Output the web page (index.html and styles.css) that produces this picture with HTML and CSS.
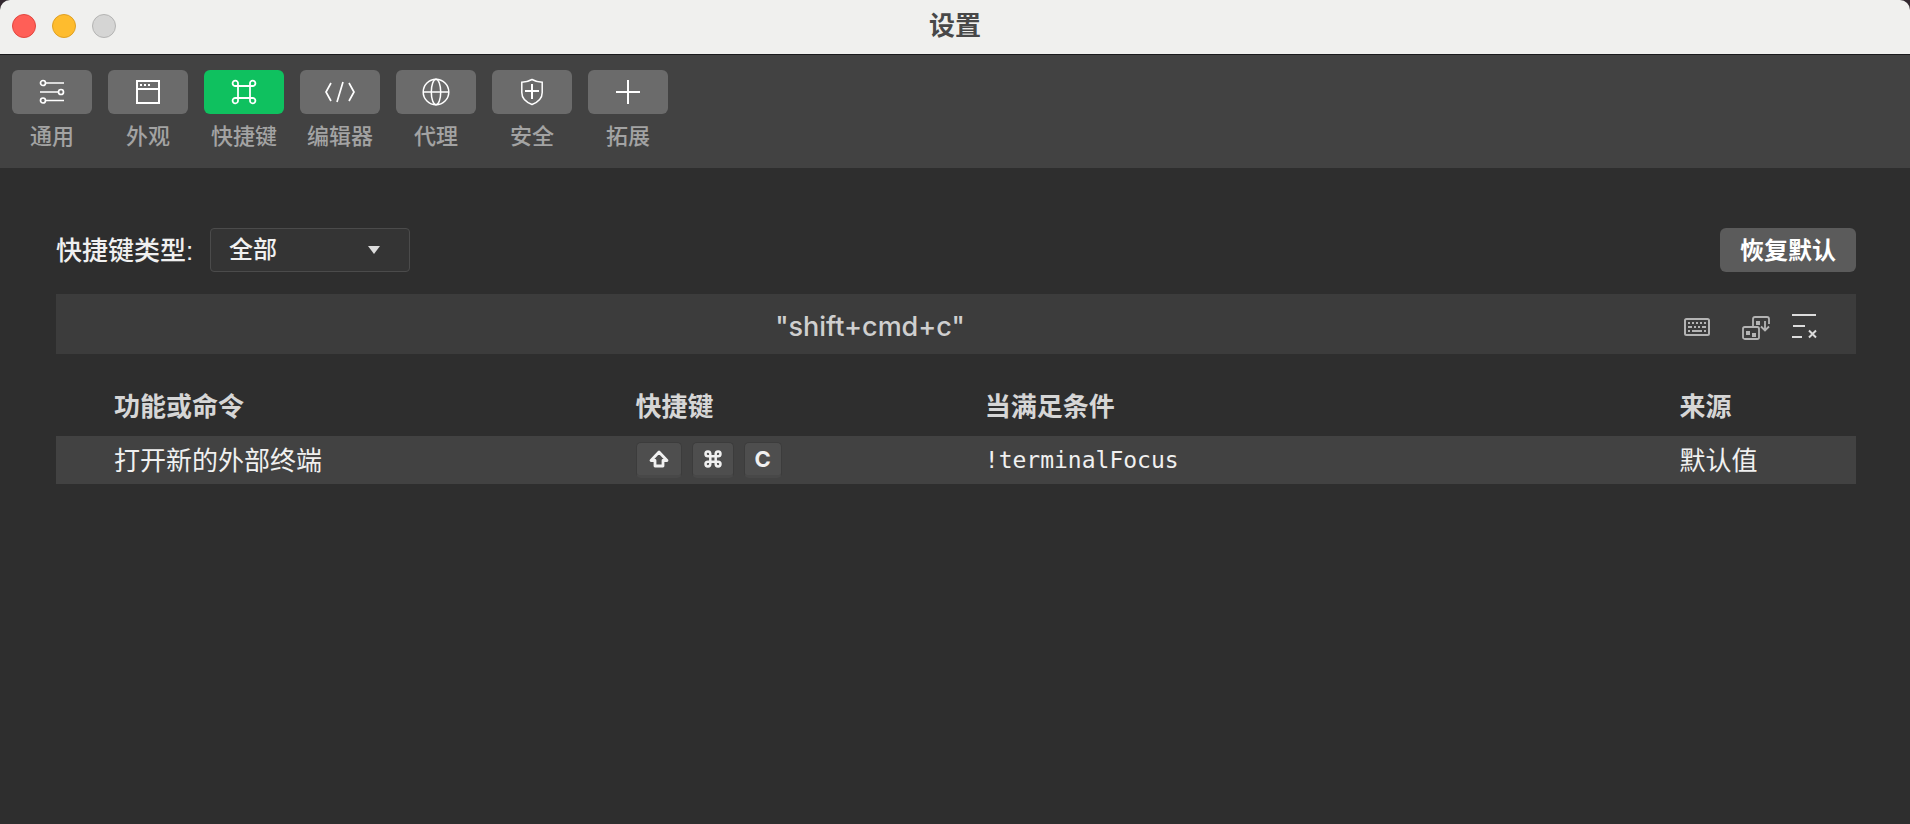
FILE: index.html
```html
<!DOCTYPE html>
<html lang="zh-CN">
<head>
<meta charset="utf-8">
<title>设置</title>
<link rel="stylesheet" href="styles.css">
</head>
<body>
<div class="window">
  <header class="titlebar">
    <div class="lights">
      <button class="light light-close" aria-label="关闭"></button>
      <button class="light light-min" aria-label="最小化"></button>
      <button class="light light-off" aria-label="缩放" disabled></button>
    </div>
    <h1 class="title">设置</h1>
  </header>

  <nav class="toolbar">
    <button class="tab">
      <span class="tab-icon"><svg width="28" height="28" viewBox="0 0 28 28" fill="none" stroke="#fff" stroke-width="1.7"><circle cx="5" cy="5" r="2.5"/><path d="M7.5 5H26M2 14h18.500M7.500 22.500H26"/><circle cx="23" cy="14" r="2.500"/><circle cx="5" cy="22.500" r="2.500"/></svg></span>
      <span class="tab-label">通用</span>
    </button>
    <button class="tab">
      <span class="tab-icon"><svg width="28" height="28" viewBox="0 0 28 28" fill="none" stroke="#fff" stroke-width="2"><path d="M3 3h22v22H3zM3 11h22"/><path d="M6 7h2M10 7h2M14 7h2"/></svg></span>
      <span class="tab-label">外观</span>
    </button>
    <button class="tab tab-active" aria-current="page">
      <span class="tab-icon"><svg width="28" height="28" viewBox="0 0 28 28" fill="none" stroke="#fff" stroke-width="1.8"><path d="M8 8V5.500A2.700 2.700 0 1 0 5.500 8H22.500A2.700 2.700 0 1 0 20 5.500V22.500A2.700 2.700 0 1 0 22.500 20H5.500A2.700 2.700 0 1 0 8 22.500Z"/></svg></span>
      <span class="tab-label">快捷键</span>
    </button>
    <button class="tab">
      <span class="tab-icon"><svg width="32" height="28" viewBox="0 0 32 28" fill="none" stroke="#fff" stroke-width="1.7"><path d="M7 5 2 14l5 9M25 5l5 9-5 9M19 4l-6 20"/></svg></span>
      <span class="tab-label">编辑器</span>
    </button>
    <button class="tab">
      <span class="tab-icon"><svg width="28" height="28" viewBox="0 0 28 28" fill="none" stroke="#fff" stroke-width="1.500"><circle cx="14" cy="14" r="12.800"/><ellipse cx="14" cy="14" rx="4.700" ry="12.800"/><path d="M1 14h26"/></svg></span>
      <span class="tab-label">代理</span>
    </button>
    <button class="tab">
      <span class="tab-icon"><svg width="28" height="28" viewBox="0 0 28 28" fill="none" stroke="#fff" stroke-width="1.500"><path d="M14 1.500C11 3.200 7.500 4.200 3.800 4.200V14.500c0 5.500 4.500 9.800 10.200 12 5.700-2.200 10.200-6.500 10.200-12V4.200C20.500 4.200 17 3.200 14 1.500Z"/><path stroke-width="2" d="M14 6v15M7 13h14"/></svg></span>
      <span class="tab-label">安全</span>
    </button>
    <button class="tab">
      <span class="tab-icon"><svg width="28" height="28" viewBox="0 0 28 28" fill="none" stroke="#fff" stroke-width="2"><path d="M14 2v24M2 14h24"/></svg></span>
      <span class="tab-label">拓展</span>
    </button>
  </nav>

  <main class="content">
    <div class="filters">
      <label class="filter-label" for="kind">快捷键类型:</label>
      <div class="select-box">
        <select class="select" id="kind"><option>全部</option></select>
        <svg class="select-arrow" width="12" height="8" viewBox="0 0 12 8"><path fill="#dcdcdc" d="M0 0h12L6 8z"/></svg>
      </div>
      <button class="reset">恢复默认</button>
    </div>

    <div class="search">
      <input class="search-input" type="text" aria-label="搜索快捷键" value='"shift+cmd+c"'>
      <button class="tool" aria-label="录制按键"><svg width="26" height="28" viewBox="0 0 26 28" fill="none" stroke="#b4b4b4" stroke-width="2"><rect x="1" y="6" width="24" height="16" rx="1.500"/><path d="M4 10h2M8 10h2M12 10h2M16 10h2M20 10h2M4 14h4M10 14h2M14 14h2M18 14h4M4 18h2M8 18h10M20 18h2"/></svg></button>
      <button class="tool tool-sort" aria-label="按优先级排序"><svg width="28" height="28" viewBox="0 0 28 28" fill="none" stroke="#b4b4b4" stroke-width="1.800"><rect x="1" y="14" width="16" height="12" rx="1.800"/><path d="M11 14V6q0-2 2-2h12q2 0 2 2v5"/><path d="M23 8v9M19 13.500l4 4 4-4"/><path stroke="none" fill="#b4b4b4" d="M14 8h4v4h-4zM4 18h4v4H4zM10 20h4v4h-4z"/></svg></button>
      <button class="tool tool-clear" aria-label="清除搜索"><svg width="26" height="28" viewBox="0 0 26 28" fill="none" stroke="#dcdcdc" stroke-width="2"><path d="M0 2h24M1 13h12M0 24h10M17 17.500l7 7M24 17.500l-7 7"/></svg></button>
    </div>

    <table class="keys">
      <colgroup><col class="col-command"><col class="col-keys"><col class="col-when"><col class="col-source"></colgroup>
      <thead>
        <tr><th>功能或命令</th><th>快捷键</th><th>当满足条件</th><th>来源</th></tr>
      </thead>
      <tbody>
        <tr>
          <td>打开新的外部终端</td>
          <td class="combo-cell">
            <div class="combo">
              <kbd class="key"><svg width="24" height="20" viewBox="-2 0 24 20" role="img" aria-label="Shift"><path fill="none" stroke="#f0f0f0" stroke-width="2.800" stroke-linejoin="round" d="M10 3 2 11.500h4V17h8v-5.500h4z"/></svg></kbd>
              <kbd class="key"><svg width="20" height="20" viewBox="-1 0 20 20" role="img" aria-label="Command"><path fill="none" stroke="#f0f0f0" stroke-width="2.500" d="M6.300 7.300V4.700A2.400 2.400 0 1 0 3.900 7.300H14.100A2.400 2.400 0 1 0 11.700 4.700V15.100A2.400 2.400 0 1 0 14.100 12.700H3.900A2.400 2.400 0 1 0 6.300 15.100Z"/></svg></kbd>
              <kbd class="key">C</kbd>
            </div>
          </td>
          <td class="when">!terminalFocus</td>
          <td>默认值</td>
        </tr>
      </tbody>
    </table>
  </main>
</div>
</body>
</html>
```

FILE: styles.css
```css
* {
  box-sizing: border-box;
}

body {
  margin: 0;
  background: #33282f;
  color: #f0f0f0;
  font-family: "Liberation Sans", "Noto Sans CJK SC", sans-serif;
  font-size: 26px;
}

button,
input,
select {
  margin: 0;
  padding: 0;
  border: 0;
  background: none;
  color: inherit;
  font: inherit;
}

svg {
  display: block;
}

.window {
  display: flex;
  flex-direction: column;
  min-height: 100vh;
  border-radius: 10px 10px 0 0;
  background: #2e2e2e;
  overflow: hidden;
}

.titlebar {
  display: grid;
  grid-template-columns: 1fr auto 1fr;
  align-items: center;
  height: 55px;
  padding: 0 12px;
  border-bottom: 1px solid #1a1a1c;
  background: #f0f0ee;
}

.lights {
  display: flex;
  gap: 16px;
  padding-bottom: 2px;
}

.light {
  width: 24px;
  height: 24px;
  border: 1px solid;
  border-radius: 50%;
}

.light-close {
  border-color: #e2463f;
  background: #ff5f57;
}

.light-min {
  border-color: #dfa023;
  background: #febc2e;
}

.light-off {
  border-color: #b4b4b3;
  background: #d5d5d4;
}

.title {
  margin: 0;
  padding-bottom: 2px;
  color: #484848;
  font-size: 26px;
  font-weight: 700;
  line-height: 36px;
}

.toolbar {
  display: flex;
  gap: 16px;
  padding: 15px 12px 13px;
  background: #424242;
}

.tab {
  display: flex;
  flex-direction: column;
  gap: 5px;
  width: 80px;
  color: #a3a3a3;
}

.tab-icon {
  display: grid;
  place-items: center;
  width: 80px;
  height: 44px;
  border-radius: 6px;
  background: #6b6b6b;
}

.tab-active .tab-icon {
  background: #0fc15f;
}

.tab-label {
  align-self: center;
  font-size: 22px;
  font-weight: 500;
  line-height: 36px;
}

.content {
  padding: 60px 54px 60px 56px;
}

.filters {
  display: flex;
  align-items: center;
  height: 44px;
}

.filter-label {
  width: 154px;
  padding-top: 2px;
  font-weight: 500;
  line-height: 42px;
}

.select-box {
  display: grid;
  align-items: center;
  width: 200px;
  height: 44px;
}

.select {
  grid-area: 1 / 1;
  width: 100%;
  height: 44px;
  padding: 0 40px 0 18px;
  border: 1px solid #4b4b4b;
  border-radius: 4px;
  background: #343434;
  font-size: 24px;
  font-weight: 500;
  line-height: 36px;
  appearance: none;
}

.select-arrow {
  grid-area: 1 / 1;
  justify-self: end;
  margin-right: 30px;
  pointer-events: none;
}

.reset {
  width: 136px;
  height: 44px;
  margin-left: auto;
  padding-bottom: 4px;
  border-radius: 6px;
  background: #5b5b5b;
  color: #fff;
  font-size: 24px;
  font-weight: 700;
}

.search {
  display: flex;
  align-items: center;
  height: 60px;
  margin-top: 22px;
  padding-right: 38px;
  background: #3c3c3c;
}

.search-input {
  flex: 1;
  min-width: 0;
  height: 60px;
  padding-top: 4px;
  color: #cfcfcf;
  font-family: Inter, "Noto Sans CJK SC", sans-serif;
  font-size: 27px;
  font-weight: 500;
  text-align: center;
}

.tool {
  padding-top: 6px;
}

.tool-sort {
  margin-left: 32px;
}

.tool-clear {
  margin-left: 22px;
}

.keys {
  width: 100%;
  margin-top: 22px;
  border-collapse: collapse;
  table-layout: fixed;
}

.col-command {
  width: 32.2%;
}

.col-keys {
  width: 19.4%;
}

.col-when {
  width: 38.6%;
}

.keys th,
.keys td {
  padding: 0 0 3px;
  text-align: left;
  white-space: nowrap;
}

.keys th:first-child,
.keys td:first-child {
  padding-left: 58px;
}

.keys th {
  height: 60px;
  color: #d6d6d6;
  font-weight: 700;
}

.keys td {
  height: 48px;
  background: #424242;
}

.keys .combo-cell {
  padding: 0;
}

.keys .when {
  padding: 0;
  font-family: "DejaVu Sans Mono", monospace;
  font-size: 23px;
}

.combo {
  display: flex;
  gap: 10px;
}

.key {
  display: grid;
  place-items: center;
  height: 36px;
  padding: 0 10px;
  border: 1px solid #3c3c3c;
  border-bottom: 3px solid #484848;
  border-radius: 5px;
  background: #4e4e4e;
  font-family: Inter, sans-serif;
  font-size: 22px;
  font-weight: 700;
}
```
